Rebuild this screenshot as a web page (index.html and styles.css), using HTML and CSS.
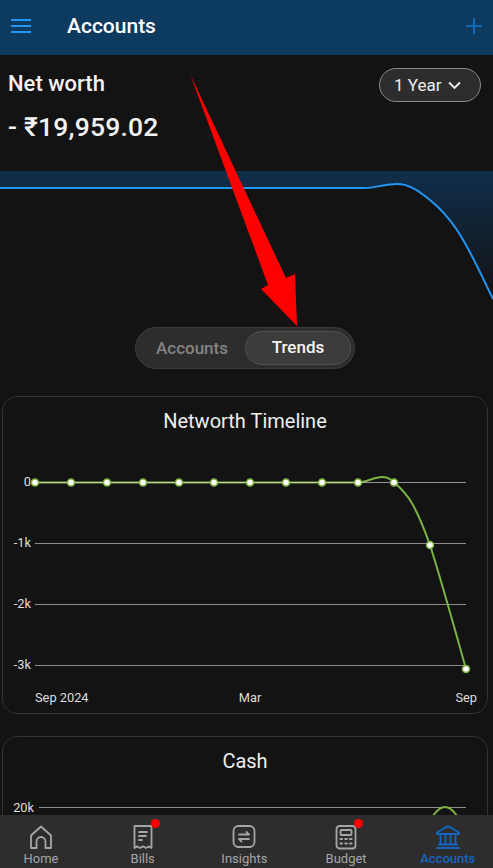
FILE: index.html
```html
<!DOCTYPE html>
<html lang="en">
<head>
    <meta charset="UTF-8">
    <meta name="viewport" content="width=device-width, initial-scale=1.0">
    <title>Accounts</title>
    <link rel="stylesheet" href="styles.css">
</head>
<body>
    <div class="app">
        <header class="topbar">
            <svg class="menu-icon" viewBox="0 0 22 16"><path d="M1 2h20M1 8h20M1 14h20"/></svg>
            <h1>Accounts</h1>
            <svg class="plus-icon" viewBox="0 0 16 16"><path d="M8 0v16M0 8h16"/></svg>
        </header>

        <main class="content">
            <section class="summary">
                <div>
                    <div class="summary-label">Net worth</div>
                    <div class="summary-value">- ₹19,959.02</div>
                </div>
                <button class="range-pill">1 Year
                    <svg viewBox="0 0 12 8"><path d="M1 1.200l5 5 5-5"/></svg>
                </button>
            </section>

            <svg class="sparkline" viewBox="0 0 493 130">
                <defs>
                    <linearGradient id="sparkFill" x1="0" y1="0" x2="0" y2="1">
                        <stop offset="0" stop-color="#102e4b"/>
                        <stop offset="1" stop-color="#131313"/>
                    </linearGradient>
                </defs>
                <path fill="url(#sparkFill)" d="M0 0H493V128C481 104 471 80 457 59C449 47 441 38 430 29C421 22 411 13 397 13C385 13 375 17 365 17H0Z"/>
                <path class="spark-line" d="M0 17H365C375 17 385 13 397 13C411 13 421 22 430 29C441 38 449 47 457 59C471 80 481 104 493 128"/>
            </svg>

            <div class="segment">
                <span class="segment-item">Accounts</span>
                <span class="segment-item active">Trends</span>
            </div>

            <section class="card">
                <h2>Networth Timeline</h2>
                <svg class="chart" viewBox="0 0 484 270">
                    <g class="grid">
                        <path d="M32 129.500H463M32 190.500H463M32 251.500H463"/>
                    </g>
                    <g class="axis">
                        <text x="28" y="72" text-anchor="end">0</text>
                        <text x="28" y="133" text-anchor="end">-1k</text>
                        <text x="28" y="194" text-anchor="end">-2k</text>
                        <text x="28" y="255" text-anchor="end">-3k</text>
                        <text x="32" y="288">Sep 2024</text>
                        <text x="247" y="288" text-anchor="middle">Mar</text>
                        <text x="474" y="288" text-anchor="end">Sep</text>
                    </g>
                    <path class="trend" d="M32 68.500H355C363 68.500 371 63 379 63C384 63 388 65 391 68.500C398 74 405 82 410 91C417 104 422 117 427 131C439 169 451 212 463 255"/>
                    <path class="zero-line" d="M32 68.500H463"/>
                    <g class="dots">
                        <circle cx="32" cy="68.500" r="3.500"/><circle cx="68" cy="68.500" r="3.500"/><circle cx="104" cy="68.500" r="3.500"/>
                        <circle cx="140" cy="68.500" r="3.500"/><circle cx="176" cy="68.500" r="3.500"/><circle cx="211" cy="68.500" r="3.500"/>
                        <circle cx="247" cy="68.500" r="3.500"/><circle cx="283" cy="68.500" r="3.500"/><circle cx="319" cy="68.500" r="3.500"/>
                        <circle cx="355" cy="68.500" r="3.500"/><circle cx="391" cy="68.500" r="3.500"/><circle cx="427" cy="131" r="3.500"/>
                        <circle cx="463" cy="255" r="3.500"/>
                    </g>
                </svg>
            </section>

            <section class="card">
                <h2>Cash</h2>
                <svg class="chart" viewBox="0 0 484 80">
                    <g class="grid"><path d="M36 53.500H463"/></g>
                    <g class="axis"><text x="31" y="58" text-anchor="end">20k</text></g>
                    <path class="trend" d="M430 62C434 56 438 53 442 53C446 53 450 56 454 62"/>
                </svg>
            </section>
        </main>

        <nav class="tabbar">
            <div class="tab">
                <svg viewBox="0 0 26 26"><path d="M3 24V11.500L13 2.500L23 11.500V24H17.500V17.500A4.500 4.500 0 0 0 8.500 17.500V24Z"/></svg>
                <span>Home</span>
            </div>
            <div class="tab">
                <span class="tab-icon">
                    <svg viewBox="0 0 26 26"><path d="M4.500 2H21.500V24L18.700 22.400L16 24L13 22.400L10 24L7.300 22.400L4.500 24Z"/><path d="M9 8H17M9 12H16M9 16H12"/></svg>
                    <i class="badge"></i>
                </span>
                <span>Bills</span>
            </div>
            <div class="tab">
                <svg viewBox="0 0 26 26"><rect x="2.500" y="2" width="21" height="21" rx="5"/><path d="M8 10.500H18L15.500 8M18 15H8L10.500 17.500"/></svg>
                <span>Insights</span>
            </div>
            <div class="tab">
                <span class="tab-icon">
                    <svg viewBox="0 0 26 26"><rect x="3.500" y="2" width="19" height="22.500" rx="3"/><rect x="7.500" y="6" width="11" height="5" rx="1"/><path class="keys" d="M7.500 15H9M12.300 15H13.800M17 15H18.500M7.500 19.500H9M12.300 19.500H13.800M17 19.500H18.500"/></svg>
                    <i class="badge"></i>
                </span>
                <span>Budget</span>
            </div>
            <div class="tab active">
                <svg viewBox="0 0 26 26"><path d="M13 2L24 8.500V10H2V8.500Z"/><path d="M5.500 10V20M10.500 10V20M15.500 10V20M20.500 10V20M4 20.500H22M2 24H24"/></svg>
                <span>Accounts</span>
            </div>
        </nav>

        <!-- annotation drawn over the screenshot -->
        <svg class="annotation" viewBox="0 0 493 868"><polygon points="190,74 286,278 295,274 297,326 261,289 268,285"/></svg>
    </div>
</body>
</html>
```

FILE: styles.css
```css
* {
    box-sizing: border-box;
}
body {
    margin: 0;
    background-color: #131313;
    font-family: Roboto, "Liberation Sans", sans-serif;
    color: #f2f2f2;
}
.app {
    position: relative;
    display: flex;
    flex-direction: column;
    height: 100vh;
    overflow: hidden;
}
.topbar {
    display: flex;
    align-items: center;
    height: 55px;
    flex-shrink: 0;
    padding: 0 11px 4px 10px;
    background-color: #0d3a5f;
}
.topbar h1 {
    flex: 1;
    margin: 0 0 0 35px;
    font-size: 21px;
    font-weight: 500;
    color: #fff;
}
.menu-icon {
    width: 22px;
    height: 16px;
    fill: none;
    stroke: #2196f3;
    stroke-width: 2;
}
.plus-icon {
    width: 16px;
    height: 16px;
    fill: none;
    stroke: #1668b5;
    stroke-width: 2;
}
.content {
    flex: 1;
    min-height: 0;
    overflow: hidden;
}
.summary {
    display: flex;
    justify-content: space-between;
    align-items: flex-start;
    height: 116px;
    padding: 13px 12px 0 8px;
}
.summary-label {
    margin-top: 3px;
    font-size: 22px;
    font-weight: 500;
    line-height: 26px;
}
.summary-value {
    margin-top: 13px;
    font-size: 26.500px;
    font-weight: 500;
    line-height: 34px;
    letter-spacing: 0.2px;
}
.range-pill {
    display: flex;
    align-items: center;
    gap: 7px;
    width: 102px;
    height: 34px;
    padding: 0 0 0 14px;
    background-color: #2d2d2d;
    border: 1.5px solid #8a8a8a;
    border-radius: 17px;
    color: #eee;
    font-family: inherit;
    font-size: 17px;
}
.range-pill svg {
    width: 13px;
    height: 9px;
    fill: none;
    stroke: #eee;
    stroke-width: 1.800;
}
.sparkline {
    display: block;
    width: 493px;
    height: 130px;
}
.spark-line {
    fill: none;
    stroke: #2196f3;
    stroke-width: 2;
}
.segment {
    display: flex;
    align-items: center;
    width: 220px;
    height: 42px;
    margin: 26px 0 27px 135px;
    padding: 3px;
    background-color: #2d2d2d;
    border: 1.5px solid #3c3c3c;
    border-radius: 21px;
}
.segment-item {
    flex: 1;
    text-align: center;
    font-size: 17px;
    font-weight: 500;
    color: #848484;
}
.segment-item.active {
    flex: 0 0 106px;
    height: 34px;
    line-height: 31px;
    background-color: #3c3c3c;
    border: 1.5px solid #505050;
    border-radius: 17px;
    color: #f5f5f5;
}
.card {
    width: 486px;
    height: 318px;
    margin: 0 0 22px 2px;
    background-color: #131313;
    border: 1px solid #333;
    border-radius: 15px;
}
.card h2 {
    margin: 13px 0 0;
    text-align: center;
    font-size: 20px;
    font-weight: 400;
    line-height: 22px;
    color: #eee;
}
.chart {
    display: block;
    width: 484px;
    margin-top: -18px;
    overflow: visible;
}
.grid path {
    stroke: #8c8c8c;
    stroke-width: 1;
    fill: none;
}
.zero-line {
    stroke: #e8e8e8;
    stroke-opacity: 0.6;
    stroke-width: 1;
    fill: none;
}
.axis text {
    font-size: 12.800px;
    fill: #ddd;
}
.trend {
    fill: none;
    stroke: #7cb342;
    stroke-width: 2;
}
.dots circle {
    fill: #fff;
    stroke: #7cb342;
    stroke-width: 1.500;
}
.tabbar {
    display: flex;
    gap: 19.700px;
    flex-shrink: 0;
    height: 53px;
    padding-top: 9px;
    background-color: #2d2d2d;
}
.tab {
    display: flex;
    flex-direction: column;
    align-items: center;
    width: 82px;
    font-size: 13px;
    color: #a6a6a6;
    line-height: 16px;
}
.tab svg {
    display: block;
    width: 26px;
    height: 26px;
    margin-bottom: 1px;
    fill: none;
    stroke: #a6a6a6;
    stroke-width: 1.800;
    stroke-linejoin: round;
    stroke-linecap: round;
}
.tab .keys {
    stroke-width: 2.200;
}
.tab.active {
    color: #1565c0;
    font-weight: 500;
}
.tab.active svg {
    stroke: #1565c0;
}
.tab-icon {
    position: relative;
}
.badge {
    position: absolute;
    top: -5px;
    right: -4px;
    width: 9px;
    height: 9px;
    background-color: #f00;
    border-radius: 50%;
}
.annotation {
    position: absolute;
    top: 0;
    left: 0;
    width: 493px;
    height: 868px;
    pointer-events: none;
}
.annotation polygon {
    fill: #f00;
}
```
